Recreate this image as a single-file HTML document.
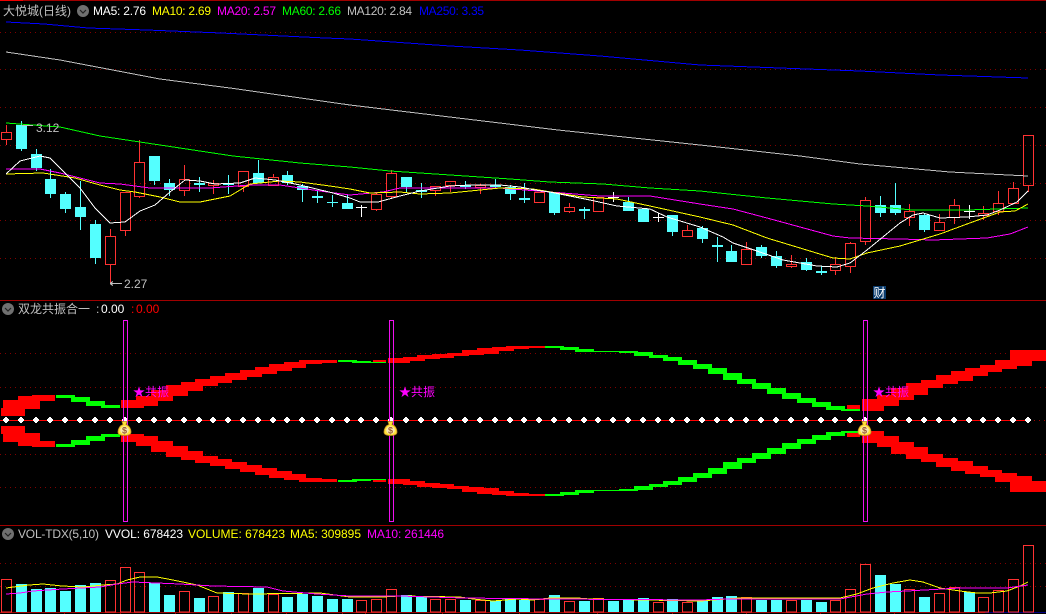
<!DOCTYPE html>
<html><head><meta charset="utf-8"><style>
html,body{margin:0;padding:0;background:#000;width:1046px;height:614px;overflow:hidden}
svg{display:block;position:absolute;left:0;top:0}
text{font-family:"Liberation Sans","WenQuanYi Zen Hei","Noto Sans CJK SC",sans-serif;font-size:12px}
</style></head><body>
<svg width="1046" height="614" viewBox="0 0 1046 614" shape-rendering="crispEdges" fill="none">
<!-- borders -->
<path d="M0 .5H1046M0 300.5H1046M0 525.5H1046M0 612.5H985" stroke="#a00000"/>
<path d="M0 .5H23" stroke="#f00000"/>
<path d="M985 612.5H1046" stroke="#000080"/>
<path d="M64.5 612V614M120.5 612V614M175.5 612V614M231.5 612V614M286.5 612V614M342.5 612V614M365.5 612V614M442.5 612V614M519.5 612V614M597.5 612V614M672.5 612V614M746.5 612V614M820.5 612V614M894.5 612V614" stroke="#a00000"/>
<!-- dotted grid -->
<path d="M0 32.5H1046M0 69.5H1046M0 107.5H1046M0 145.5H1046M0 183.5H1046M0 220.5H1046M0 258.5H1046M0 353.5H1046M0 387.5H1046M0 454.5H1046M0 487.5H1046M0 563.5H1046M0 586.5H1046" stroke="#800000" stroke-dasharray="1 4"/>

<!-- candle wicks cyan -->
<path stroke="#54ffff" d="M21.5 121V151M36.5 149V171M50.5 169V198M65.5 192V213M80.5 181V230M95.5 220V264M154.5 156V185M169.5 179V196M199.5 177V192M228.5 175V194M258.5 160V183M287.5 171V185M302.5 184V202M317.5 191V203M332.5 195V207M347.5 194V209M406.5 177V193M421.5 183V198M465.5 181V189M495.5 179V188M510.5 185V200M524.5 183V203M554.5 192V215M584.5 207V219M628.5 197V211M643.5 208V222M672.5 215V236M702.5 226V243M717.5 237V262M731.5 245V262M761.5 245V258M776.5 251V268M806.5 258V271M821.5 266V275M880.5 196V217M895.5 183V215M924.5 213V232"/>
<!-- candle bodies cyan -->
<path fill="#54ffff" d="M16 125h11V149h-11zM31 154h11V168h-11zM45 179h11V194h-11zM60 194h11V209h-11zM75 207h11V217h-11zM90 224h11V258h-11zM149 156h11V181h-11zM164 183h11V190h-11zM194 183h11V185h-11zM223 183h11V185h-11zM253 173h11V183h-11zM282 175h11V183h-11zM297 186h11V190h-11zM312 196h11V198h-11zM327 202h11V203h-11zM342 203h11V209h-11zM401 177h11V187h-11zM416 190h11V192h-11zM460 185h11V187h-11zM490 185h11V187h-11zM505 187h11V194h-11zM519 198h11V200h-11zM549 192h11V213h-11zM579 209h11V211h-11zM623 202h11V211h-11zM638 209h11V222h-11zM667 215h11V232h-11zM697 228h11V239h-11zM712 245h11V247h-11zM726 251h11V262h-11zM756 247h11V256h-11zM771 256h11V266h-11zM801 262h11V270h-11zM816 271h11V273h-11zM875 205h11V213h-11zM890 205h11V213h-11zM919 215h11V230h-11z"/>
<!-- red candles -->
<path stroke="#ff3232" d="M1.5 132.5h10v7h-10zM105.5 236.5h10v28h-10zM120.5 192.5h10v38h-10zM134.5 162.5h10v34h-10zM179.5 179.5h10v11h-10zM208.5 183.5h10v2h-10zM238.5 171.5h10v15h-10zM268.5 177.5h10v8h-10zM371.5 194.5h10v15h-10zM386.5 173.5h10v23h-10zM430.5 186.5h10v4h-10zM445.5 181.5h10v4h-10zM475.5 185.5h10v2h-10zM534.5 192.5h10v10h-10zM564.5 207.5h10v4h-10zM593.5 197.5h10v14h-10zM682.5 230.5h10v6h-10zM741.5 249.5h10v15h-10zM786.5 264.5h10v2h-10zM830.5 264.5h10v6h-10zM845.5 243.5h10v23h-10zM860.5 200.5h10v41h-10zM904.5 211.5h10v6h-10zM934.5 222.5h10v8h-10zM949.5 205.5h10v12h-10zM978.5 213.5h10v2h-10zM993.5 203.5h10v8h-10zM1008.5 188.5h10v15h-10zM1023.5 135.5h10v50h-10zM6.5 125V132M6.5 140V145M110.5 229V236M110.5 265V283M125.5 231V236M139.5 140V162M139.5 197V198M184.5 165V179M184.5 191V196M213.5 180V183M213.5 186V194M243.5 187V192M273.5 174V177M376.5 193V194M376.5 210V211M391.5 170V173M391.5 197V198M435.5 191V196M450.5 186V192M480.5 184V185M480.5 188V194M569.5 203V207M569.5 212V213M687.5 225V230M746.5 242V249M791.5 255V264M791.5 267V268M835.5 257V264M835.5 271V275M850.5 242V243M850.5 267V273M865.5 197V200M865.5 242V245M909.5 204V211M909.5 218V226M939.5 214V222M954.5 199V205M954.5 218V224M983.5 206V213M983.5 216V220M998.5 191V203M998.5 212V215M1013.5 182V188M1028.5 186V192"/>
<!-- white crosses -->
<path stroke="#fff" d="M356 207.5h11M361.5 205V217M608 197.5h11M613.5 192V202M653 217.5h11M658.5 213V222M964 211.5h11M969.5 205V219"/>

<!-- MA lines -->
<polyline stroke="#0000ff" points="6,22 44,24 88,28 147,30 221,33 325,38 350,39 450,46 520,50 600,56 700,65 780,68 860,71 940,75 1028,78"/>
<polyline stroke="#c0c0c0" points="6,52 60,60 160,79 230,88 350,105 458,118 558,130 700,145 800,156 860,164 950,172 1028,176"/>
<polyline stroke="#00ff00" points="6,123 60,127 100,136 160,145 233,156 300,163 350,167 390,171 450,175 510,179 550,182 603,184 650,188 700,191 767,198 833,204 867,206 913,210 967,210 1028,208"/>
<polyline stroke="#ff00ff" points="6,169 40,169 60,173 100,183 120,184 150,188 210,188 250,185 280,185 320,191 350,195 383,192 400,188 450,188 500,188 550,192 600,196 650,196 700,204 733,209 767,218 800,227 833,236 850,238 900,239 933,240 987,238 1010,234 1028,227"/>
<polyline stroke="#ffff00" points="6,174 43,173 75,178 100,185 120,190 135,192 160,197 180,202 200,202 230,196 250,184 280,181 300,182 330,186 350,189 370,193 400,192 420,194 450,193 480,190 500,188 533,189 557,193 583,197 617,199 650,206 700,217 733,225 767,238 800,248 833,258 850,259 867,253 900,246 940,234 967,224 1000,212 1015,211 1028,204"/>
<polyline stroke="#ffffff" points="6,174 20,161 40,156 50,158 65,173 80,188 95,208 110,223 125,222 140,211 155,205 170,192 185,180 200,181 215,184 240,183 255,178 275,180 300,185 333,193 350,198 360,202 378,202 400,196 420,191 450,186 470,185 500,185 520,187 535,190 550,192 570,196 590,200 617,206 650,209 667,217 700,227 723,237 733,243 757,251 783,260 817,266 837,267 850,263 867,250 900,223 913,215 923,213 940,218 967,217 987,215 1000,210 1017,202 1028,191"/>

<!-- Ribbons -->
<defs>
<g id="rb">
<path fill="#ff0000" d="M1 408H25V416H1zM3 400H40V409H3zM18 396H40V409H18zM32 395H55V401H32zM121 400H144V408H121zM136 396H158V406H136zM151 390H173V401H151zM166 385H188V396H166zM181 382H203V391H181zM195 379H218V386H195zM210 376H232V383H210zM225 373H247V380H225zM240 370H262V377H240zM255 367H277V374H255zM269 364H292V371H269zM284 362H306V368H284zM299 360H322V364H299zM314 360H337V363H314zM373 360H386V362H373zM388 358H410V363H388zM403 357H425V361H403zM417 355H440V359H417zM432 354H454V358H432zM447 353H469V356H447zM462 350H484V355H462zM477 348H499V354H477zM492 347H514V351H492zM506 346H529V349H506zM529 346H545V348H529zM847 405H860V409H847zM862 399H884V411H862zM877 395H899V406H877zM891 388H914V400H891zM906 383H928V395H906zM921 380H943V388H921zM936 375H958V384H936zM951 371H973V381H951zM965 368H988V376H965zM980 365H1002V372H980zM995 360H1017V369H995zM1010 350H1032V366H1010zM1032 350H1046V361H1032z"/>
<path fill="#00ff00" d="M56 395H75V398H56zM71 397H90V402H71zM86 401H105V406H86zM101 405H120V408H101zM338 360H357V362H338zM352 361H371V363H352zM371 362H386V363H371zM545 346H564V348H545zM560 347H579V350H560zM575 349H594V352H575zM594 351H619V352H594zM619 351H638V353H619zM634 352H653V356H634zM649 355H668V358H649zM663 357H682V361H663zM678 360H697V365H678zM693 364H712V369H693zM708 368H727V374H708zM723 373H742V380H723zM737 379H756V384H737zM752 383H771V389H752zM767 388H786V394H767zM782 393H801V399H782zM797 398H816V403H797zM812 402H831V407H812zM826 406H845V410H826zM841 409H860V411H841z"/>
</g>
</defs>
<use href="#rb"/>
<use href="#rb" transform="matrix(1 0 0 -1 0 842)"/>

<!-- baseline then diamonds -->
<path d="M0 420.5H1029" stroke="#ff0000"/>
<path d="M1029 420.5H1046" stroke="#a00000" stroke-dasharray="1 4"/>
<path fill="#fff" d="M3 419h6v2h-6zm1-1h4v4h-4zm1-1h2v6h-2zM18 419h6v2h-6zm1-1h4v4h-4zm1-1h2v6h-2zM33 419h6v2h-6zm1-1h4v4h-4zm1-1h2v6h-2zM47 419h6v2h-6zm1-1h4v4h-4zm1-1h2v6h-2zM62 419h6v2h-6zm1-1h4v4h-4zm1-1h2v6h-2zM77 419h6v2h-6zm1-1h4v4h-4zm1-1h2v6h-2zM92 419h6v2h-6zm1-1h4v4h-4zm1-1h2v6h-2zM107 419h6v2h-6zm1-1h4v4h-4zm1-1h2v6h-2zM122 419h6v2h-6zm1-1h4v4h-4zm1-1h2v6h-2zM136 419h6v2h-6zm1-1h4v4h-4zm1-1h2v6h-2zM151 419h6v2h-6zm1-1h4v4h-4zm1-1h2v6h-2zM166 419h6v2h-6zm1-1h4v4h-4zm1-1h2v6h-2zM181 419h6v2h-6zm1-1h4v4h-4zm1-1h2v6h-2zM196 419h6v2h-6zm1-1h4v4h-4zm1-1h2v6h-2zM210 419h6v2h-6zm1-1h4v4h-4zm1-1h2v6h-2zM225 419h6v2h-6zm1-1h4v4h-4zm1-1h2v6h-2zM240 419h6v2h-6zm1-1h4v4h-4zm1-1h2v6h-2zM255 419h6v2h-6zm1-1h4v4h-4zm1-1h2v6h-2zM270 419h6v2h-6zm1-1h4v4h-4zm1-1h2v6h-2zM284 419h6v2h-6zm1-1h4v4h-4zm1-1h2v6h-2zM299 419h6v2h-6zm1-1h4v4h-4zm1-1h2v6h-2zM314 419h6v2h-6zm1-1h4v4h-4zm1-1h2v6h-2zM329 419h6v2h-6zm1-1h4v4h-4zm1-1h2v6h-2zM344 419h6v2h-6zm1-1h4v4h-4zm1-1h2v6h-2zM358 419h6v2h-6zm1-1h4v4h-4zm1-1h2v6h-2zM373 419h6v2h-6zm1-1h4v4h-4zm1-1h2v6h-2zM388 419h6v2h-6zm1-1h4v4h-4zm1-1h2v6h-2zM403 419h6v2h-6zm1-1h4v4h-4zm1-1h2v6h-2zM418 419h6v2h-6zm1-1h4v4h-4zm1-1h2v6h-2zM432 419h6v2h-6zm1-1h4v4h-4zm1-1h2v6h-2zM447 419h6v2h-6zm1-1h4v4h-4zm1-1h2v6h-2zM462 419h6v2h-6zm1-1h4v4h-4zm1-1h2v6h-2zM477 419h6v2h-6zm1-1h4v4h-4zm1-1h2v6h-2zM492 419h6v2h-6zm1-1h4v4h-4zm1-1h2v6h-2zM507 419h6v2h-6zm1-1h4v4h-4zm1-1h2v6h-2zM521 419h6v2h-6zm1-1h4v4h-4zm1-1h2v6h-2zM536 419h6v2h-6zm1-1h4v4h-4zm1-1h2v6h-2zM551 419h6v2h-6zm1-1h4v4h-4zm1-1h2v6h-2zM566 419h6v2h-6zm1-1h4v4h-4zm1-1h2v6h-2zM581 419h6v2h-6zm1-1h4v4h-4zm1-1h2v6h-2zM595 419h6v2h-6zm1-1h4v4h-4zm1-1h2v6h-2zM610 419h6v2h-6zm1-1h4v4h-4zm1-1h2v6h-2zM625 419h6v2h-6zm1-1h4v4h-4zm1-1h2v6h-2zM640 419h6v2h-6zm1-1h4v4h-4zm1-1h2v6h-2zM655 419h6v2h-6zm1-1h4v4h-4zm1-1h2v6h-2zM669 419h6v2h-6zm1-1h4v4h-4zm1-1h2v6h-2zM684 419h6v2h-6zm1-1h4v4h-4zm1-1h2v6h-2zM699 419h6v2h-6zm1-1h4v4h-4zm1-1h2v6h-2zM714 419h6v2h-6zm1-1h4v4h-4zm1-1h2v6h-2zM728 419h6v2h-6zm1-1h4v4h-4zm1-1h2v6h-2zM743 419h6v2h-6zm1-1h4v4h-4zm1-1h2v6h-2zM758 419h6v2h-6zm1-1h4v4h-4zm1-1h2v6h-2zM773 419h6v2h-6zm1-1h4v4h-4zm1-1h2v6h-2zM788 419h6v2h-6zm1-1h4v4h-4zm1-1h2v6h-2zM803 419h6v2h-6zm1-1h4v4h-4zm1-1h2v6h-2zM818 419h6v2h-6zm1-1h4v4h-4zm1-1h2v6h-2zM832 419h6v2h-6zm1-1h4v4h-4zm1-1h2v6h-2zM847 419h6v2h-6zm1-1h4v4h-4zm1-1h2v6h-2zM862 419h6v2h-6zm1-1h4v4h-4zm1-1h2v6h-2zM877 419h6v2h-6zm1-1h4v4h-4zm1-1h2v6h-2zM892 419h6v2h-6zm1-1h4v4h-4zm1-1h2v6h-2zM906 419h6v2h-6zm1-1h4v4h-4zm1-1h2v6h-2zM921 419h6v2h-6zm1-1h4v4h-4zm1-1h2v6h-2zM936 419h6v2h-6zm1-1h4v4h-4zm1-1h2v6h-2zM951 419h6v2h-6zm1-1h4v4h-4zm1-1h2v6h-2zM966 419h6v2h-6zm1-1h4v4h-4zm1-1h2v6h-2zM980 419h6v2h-6zm1-1h4v4h-4zm1-1h2v6h-2zM995 419h6v2h-6zm1-1h4v4h-4zm1-1h2v6h-2zM1010 419h6v2h-6zm1-1h4v4h-4zm1-1h2v6h-2zM1025 419h6v2h-6zm1-1h4v4h-4zm1-1h2v6h-2z"/>

<!-- magenta boxes -->
<path stroke="#f010f0" d="M123.5 320.5h4v201h-4zM389.5 320.5h4v201h-4zM863.5 320.5h4v201h-4z"/>

<!-- money bags -->
<g shape-rendering="auto">
<g transform="translate(124.5,429)"><path d="M-2.5-7.5H2.5L1.5-4.5C4.5-3.5 6.5-.5 6.5 3 6.5 5.5 4 6.5 0 6.5-4 6.5-6.5 5.5-6.5 3-6.5-.5-4.5-3.5-1.5-4.5Z" fill="#ffe23a" stroke="#c08a20" stroke-width=".8"/><ellipse cx="0" cy="1.2" rx="4.3" ry="3.9" fill="#f8e8b0"/><text x="-2.5" y="4.6" fill="#9a5a30" style="font-size:9px;font-weight:bold">$</text></g>
<g transform="translate(390.5,429)"><path d="M-2.5-7.5H2.5L1.5-4.5C4.5-3.5 6.5-.5 6.5 3 6.5 5.5 4 6.5 0 6.5-4 6.5-6.5 5.5-6.5 3-6.5-.5-4.5-3.5-1.5-4.5Z" fill="#ffe23a" stroke="#c08a20" stroke-width=".8"/><ellipse cx="0" cy="1.2" rx="4.3" ry="3.9" fill="#f8e8b0"/><text x="-2.5" y="4.6" fill="#9a5a30" style="font-size:9px;font-weight:bold">$</text></g>
<g transform="translate(864.5,429)"><path d="M-2.5-7.5H2.5L1.5-4.5C4.5-3.5 6.5-.5 6.5 3 6.5 5.5 4 6.5 0 6.5-4 6.5-6.5 5.5-6.5 3-6.5-.5-4.5-3.5-1.5-4.5Z" fill="#ffe23a" stroke="#c08a20" stroke-width=".8"/><ellipse cx="0" cy="1.2" rx="4.3" ry="3.9" fill="#f8e8b0"/><text x="-2.5" y="4.6" fill="#9a5a30" style="font-size:9px;font-weight:bold">$</text></g>
</g>

<!-- volume bars -->
<path fill="#54ffff" d="M16 584h11V612h-11zM31 589h11V612h-11zM45 588h11V612h-11zM60 591h11V612h-11zM75 585h11V612h-11zM90 583h11V612h-11zM149 583h11V612h-11zM164 595h11V612h-11zM194 598h11V612h-11zM223 592h11V612h-11zM253 588h11V612h-11zM282 597h11V612h-11zM297 594h11V612h-11zM312 596h11V612h-11zM327 599h11V612h-11zM342 599h11V612h-11zM401 595h11V612h-11zM416 597h11V612h-11zM460 600h11V612h-11zM490 601h11V612h-11zM505 599h11V612h-11zM519 600h11V612h-11zM549 595h11V612h-11zM579 601h11V612h-11zM608 601h11V612h-11zM623 600h11V612h-11zM638 598h11V612h-11zM667 599h11V612h-11zM697 601h11V612h-11zM712 597h11V612h-11zM726 596h11V612h-11zM756 600h11V612h-11zM771 600h11V612h-11zM801 600h11V612h-11zM816 602h11V612h-11zM875 575h11V612h-11zM890 584h11V612h-11zM919 597h11V612h-11zM964 592h11V612h-11z"/>
<path stroke="#ff3232" d="M1.5 579.5h10V612h-10zM105.5 580.5h10V612h-10zM120.5 567.5h10V612h-10zM134.5 572.5h10V612h-10zM179.5 591.5h10V612h-10zM208.5 596.5h10V612h-10zM238.5 593.5h10V612h-10zM268.5 594.5h10V612h-10zM356.5 600.5h10V612h-10zM371.5 599.5h10V612h-10zM386.5 589.5h10V612h-10zM430.5 599.5h10V612h-10zM445.5 599.5h10V612h-10zM475.5 600.5h10V612h-10zM534.5 599.5h10V612h-10zM564.5 601.5h10V612h-10zM593.5 598.5h10V612h-10zM653.5 602.5h10V612h-10zM682.5 602.5h10V612h-10zM741.5 597.5h10V612h-10zM786.5 600.5h10V612h-10zM830.5 600.5h10V612h-10zM845.5 589.5h10V612h-10zM860.5 564.5h10V612h-10zM904.5 589.5h10V612h-10zM934.5 593.5h10V612h-10zM949.5 587.5h10V612h-10zM978.5 597.5h10V612h-10zM993.5 590.5h10V612h-10zM1008.5 579.5h10V612h-10zM1023.5 545.5h10V612h-10z"/>
<polyline stroke="#ffff00" points="6,588 29,585 43,584 62,586 83,587 103,585 117,584 127,580 140,577 157,577 173,580 197,585 217,593 250,594 320,593 350,597 383,597 400,596 460,597 473,599 493,601 517,599 533,600 550,598 577,598 590,599 700,601 740,598 800,598 840,598 857,594 873,588 893,583 910,580 923,582 940,588 960,591 977,593 990,593 1007,591 1020,586 1028,582"/>
<polyline stroke="#ff00ff" points="6,594 20,593 33,591 63,589 100,587 117,584 133,582 180,584 213,586 267,587 283,591 317,594 350,596 400,596 463,598 550,599 700,600 727,599 840,599 867,594 887,592 907,591 960,588 1007,588 1028,585"/>

<!-- left marks -->
<path d="M22 125.5H33M110 283.5H122M110 283.5l3-2M110 283.5l3 2" stroke="#c0c0c0"/>
<rect x="873" y="286" width="13" height="13" fill="#0a3c6e"/>

<!-- header icons -->
<g shape-rendering="auto">
<circle cx="83" cy="11" r="6" fill="#707070"/><path d="M80 10l3 3 3-3" stroke="#222" stroke-width="1.2"/>
<circle cx="8" cy="309" r="6" fill="#707070"/><path d="M5 308l3 3 3-3" stroke="#222" stroke-width="1.2"/>
<circle cx="8" cy="534" r="6" fill="#707070"/><path d="M5 533l3 3 3-3" stroke="#222" stroke-width="1.2"/>
</g>

<!-- texts -->
<g>
<text x="3" y="15" fill="#c0c0c0">大悦城(日线)</text>
<text x="93" y="15" fill="#ffffff" textLength="53">MA5: 2.76</text>
<text x="152" y="15" fill="#ffff00" textLength="59">MA10: 2.69</text>
<text x="217" y="15" fill="#ff00ff" textLength="59">MA20: 2.57</text>
<text x="282" y="15" fill="#00ff00" textLength="59">MA60: 2.66</text>
<text x="347" y="15" fill="#c0c0c0" textLength="65">MA120: 2.84</text>
<text x="419" y="15" fill="#0000ff" textLength="65">MA250: 3.35</text>
<text x="36" y="132" fill="#c0c0c0">3.12</text>
<text x="124" y="288" fill="#c0c0c0">2.27</text>
<text x="873.5" y="297" fill="#ffffff">财</text>
<text x="18" y="313" fill="#c0c0c0">双龙共振合一</text>
<text x="96" y="313" fill="#c0c0c0">:</text>
<text x="101" y="313" fill="#ffffff">0.00</text>
<text x="131" y="313" fill="#ff0000">:</text>
<text x="136" y="313" fill="#ff0000">0.00</text>
<text x="133" y="396" fill="#ff00ff">★共振</text>
<text x="399" y="396" fill="#ff00ff">★共振</text>
<text x="873" y="396" fill="#ff00ff">★共振</text>
<text x="18" y="538" fill="#c0c0c0" textLength="81">VOL-TDX(5,10)</text>
<text x="105" y="538" fill="#ffffff" textLength="78">VVOL: 678423</text>
<text x="188" y="538" fill="#ffff00" textLength="97">VOLUME: 678423</text>
<text x="290" y="538" fill="#ffff00" textLength="71">MA5: 309895</text>
<text x="367" y="538" fill="#ff00ff" textLength="77">MA10: 261446</text>
</g>
</svg>
</body></html>
